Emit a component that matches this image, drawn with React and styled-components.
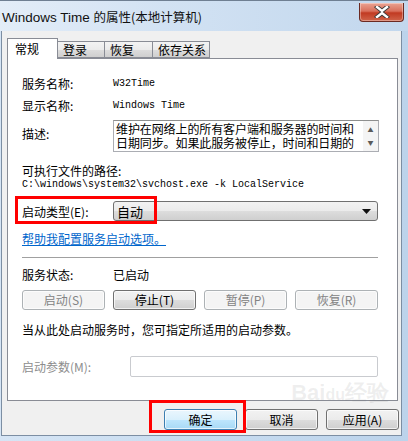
import React from 'react'
import styled, { createGlobalStyle } from 'styled-components'

const GlobalStyle = createGlobalStyle`
  html, body {
    margin: 0;
    padding: 0;
    background: #c7dbef;
  }
  body {
    font-family: "Noto Sans CJK SC", "Noto Sans", sans-serif;
    font-size: 12px;
    color: #000;
  }
`

const CJK = `"Noto Sans CJK SC", "Noto Sans", sans-serif`
const MONO = `"Liberation Mono", "DejaVu Sans Mono", monospace`

function App() {
  return (
    <Frame>
      <GlobalStyle />
      <TitleBar>
        <Title>
          <Latin>Windows Time </Latin>的属性(本地计算机)
        </Title>
        <CloseButton>
          <svg width="16" height="12" viewBox="0 0 16 12">
            <path d="M3 1 L8 5 L13 1 M3 11 L8 7 L13 11" stroke="#3a3a3a" strokeWidth="4.2" fill="none" strokeLinecap="square" />
            <path d="M3 1 L8 5 L13 1 M3 11 L8 7 L13 11" stroke="#fff" strokeWidth="2.4" fill="none" strokeLinecap="square" />
          </svg>
        </CloseButton>
      </TitleBar>

      <Body>
        <TabStrip>
          <Tab $active $w={51}>常规</Tab>
          <Tab $w={47}>登录</Tab>
          <Tab $w={48}>恢复</Tab>
          <Tab $w={57}>依存关系</Tab>
        </TabStrip>

        <Panel>
          <Row $h={22}>
            <Label>服务名称:</Label>
            <Mono>W32Time</Mono>
          </Row>
          <Row $h={22}>
            <Label>显示名称:</Label>
            <Mono>Windows Time</Mono>
          </Row>
          <Row $h={32} $mt={4} $top>
            <Label $offset={5}>描述:</Label>
            <DescBox>
              <DescText>
                维护在网络上的所有客户端和服务器的时间和日期同步。如果此服务被停止，时间和日期的
              </DescText>
              <ScrollBar>
                <Arrow>▲</Arrow>
                <Arrow>▼</Arrow>
              </ScrollBar>
            </DescBox>
          </Row>
          <Line $mt={12}>可执行文件的路径:</Line>
          <PathLine>C:\windows\system32\svchost.exe -k LocalService</PathLine>

          <Row $h={20} $mt={9}>
            <Label>启动类型(E):</Label>
            <Select>
              <span>自动</span>
              <svg width="9" height="5" viewBox="0 0 9 5">
                <path d="M0 0 H9 L4.5 5 Z" fill="#111" />
              </svg>
            </Select>
            <Highlight $l={-7} $t={-5} $w={142} $h={28} />
          </Row>

          <HelpLink>帮助我配置服务启动选项。</HelpLink>
          <Separator />

          <Row $h={14} $mt={9}>
            <Label>服务状态:</Label>
            <span>已启动</span>
          </Row>

          <ButtonRow>
            <PushButton disabled>启动(S)</PushButton>
            <PushButton>停止(T)</PushButton>
            <PushButton disabled>暂停(P)</PushButton>
            <PushButton disabled>恢复(R)</PushButton>
          </ButtonRow>

          <Line $mt={13}>当从此处启动服务时，您可指定所适用的启动参数。</Line>

          <Row $h={21} $mt={19}>
            <Label $w={108} $muted>启动参数(M):</Label>
            <ParamInput />
          </Row>
          <Watermark>Bai<small>du</small>经验</Watermark>
        </Panel>

        <Footer>
          <FooterSlot>
            <DialogButton $primary>确定</DialogButton>
            <Highlight $l={-15} $t={-9} $w={97} $h={33} />
          </FooterSlot>
          <DialogButton>取消</DialogButton>
          <DialogButton>应用(A)</DialogButton>
        </Footer>
      </Body>
    </Frame>
  )
}

export default App

const Frame = styled.div`
  width: 408px;
  height: 441px;
  display: flex;
  flex-direction: column;
  background: linear-gradient(90deg, #d6e5f5 0%, #c8dcf0 50%, #bcd3eb 100%);
  border-top: 1px solid #6f7f92;
  box-sizing: border-box;
  overflow: hidden;
`

const TitleBar = styled.div`
  height: 30px;
  display: flex;
  align-items: flex-start;
  justify-content: space-between;
  background: linear-gradient(90deg, #e3edf8 0%, #d2e2f3 40%, #c2d7ed 100%);
`

const Title = styled.div`
  font-family: "Noto Sans CJK SC", sans-serif;
  font-size: 12.5px;
  line-height: 18px;
  padding: 7px 0 0 2px;
  color: #111;
  white-space: nowrap;
`

const Latin = styled.span`
  font-family: "Liberation Sans", sans-serif;
  font-size: 13.5px;
`

const CloseButton = styled.div`
  width: 43px;
  height: 18px;
  margin: 2px 4px 0 0;
  display: flex;
  align-items: center;
  justify-content: center;
  border: 1px solid #6b2a22;
  border-top: none;
  border-radius: 0 0 4px 4px;
  background: linear-gradient(180deg, #eaa392 0%, #d9705c 45%, #c13a22 55%, #d0644a 100%);
  box-shadow: inset 0 0 0 1px rgba(255, 255, 255, 0.35);
`

const Body = styled.div`
  flex: 1;
  margin: 0 6px 5px 1px;
  background: #f0f0f0;
  border: 1px solid #7c8ea3;
  border-top: none;
  display: flex;
  flex-direction: column;
  padding: 7px 0 0 5px;
`

const TabStrip = styled.div`
  display: flex;
  align-items: flex-end;
  height: 20px;
`

const Tab = styled.div`
  position: relative;
  box-sizing: border-box;
  width: ${(p) => p.$w}px;
  height: ${(p) => (p.$active ? 21 : 17)}px;
  margin-bottom: ${(p) => (p.$active ? -1 : 0)}px;
  z-index: ${(p) => (p.$active ? 2 : 1)};
  border: 1px solid #898c95;
  border-bottom: ${(p) => (p.$active ? 'none' : '1px solid #898c95')};
  border-left: ${(p) => (p.$active ? '1px solid #898c95' : 'none')};
  background: ${(p) =>
    p.$active ? '#fff' : 'linear-gradient(180deg, #f3f3f3 0%, #ebebeb 50%, #dddddd 51%, #cfcfcf 100%)'};
  font-size: 12px;
  line-height: ${(p) => (p.$active ? 20 : 16)}px;
  padding-left: ${(p) => (p.$active ? 7 : 5)}px;
  white-space: nowrap;
`

const Panel = styled.div`
  position: relative;
  width: 391px;
  height: 343px;
  box-sizing: border-box;
  background: #fff;
  border: 1px solid #898c95;
  padding: 13px 0 0 14px;
  display: flex;
  flex-direction: column;
`

const Row = styled.div`
  position: relative;
  display: flex;
  align-items: ${(p) => (p.$top ? 'flex-start' : 'center')};
  height: ${(p) => p.$h}px;
  margin-top: ${(p) => p.$mt || 0}px;
  flex-shrink: 0;
`

const Label = styled.div`
  width: ${(p) => p.$w || 91}px;
  flex-shrink: 0;
  margin-top: ${(p) => p.$offset || 0}px;
  color: ${(p) => (p.$muted ? '#8d8d8d' : '#000')};
  white-space: nowrap;
`

const Mono = styled.span`
  font-family: ${MONO};
  font-size: 10px;
`

const Line = styled.div`
  margin-top: ${(p) => p.$mt || 0}px;
  line-height: 14px;
  white-space: nowrap;
`

const PathLine = styled.div`
  font-family: ${MONO};
  font-size: 10px;
  line-height: 14px;
  white-space: nowrap;
`

const DescBox = styled.div`
  width: 266px;
  height: 32px;
  box-sizing: border-box;
  border: 1px solid #abadb3;
  border-top-color: #8e8f8f;
  display: flex;
  overflow: hidden;
`

const DescText = styled.div`
  flex: 1;
  font-size: 12px;
  line-height: 14px;
  padding: 1px 0 0 2px;
  letter-spacing: -0.1px;
`

const ScrollBar = styled.div`
  width: 15px;
  background: #f4f4f4;
  display: flex;
  flex-direction: column;
  justify-content: space-between;
  align-items: center;
  padding: 5px 0 4px;
`

const Arrow = styled.span`
  font-size: 6px;
  line-height: 8px;
  color: #5a5a5a;
`

const Select = styled.div`
  width: 265px;
  height: 20px;
  box-sizing: border-box;
  border: 1px solid #707070;
  border-radius: 3px;
  background: linear-gradient(180deg, #f2f2f2 0%, #ebebeb 50%, #dddddd 51%, #cfcfcf 100%);
  display: flex;
  align-items: center;
  justify-content: space-between;
  padding: 0 6px 0 3px;
  font-size: 13px;
`

const Highlight = styled.div`
  position: absolute;
  left: ${(p) => p.$l}px;
  top: ${(p) => p.$t}px;
  width: ${(p) => p.$w}px;
  height: ${(p) => p.$h}px;
  box-sizing: border-box;
  border: 3px solid #ff0000;
  pointer-events: none;
  z-index: 3;
`

const HelpLink = styled.a`
  margin-top: 11px;
  line-height: 14px;
  color: #0066cc;
  text-decoration: underline;
  align-self: flex-start;
  cursor: pointer;
`

const Separator = styled.div`
  width: 356px;
  height: 1px;
  background: #a0a0a0;
  margin-top: 11px;
  flex-shrink: 0;
`

const ButtonRow = styled.div`
  display: flex;
  gap: 8px;
  margin-top: 9px;
  width: 356px;
`

const PushButton = styled.button`
  width: 83px;
  height: 20px;
  box-sizing: border-box;
  padding: 0;
  font-family: ${CJK};
  font-size: 12px;
  line-height: 16px;
  border-radius: 3px;
  border: 1px solid ${(p) => (p.disabled ? '#adb2b5' : '#707070')};
  color: ${(p) => (p.disabled ? '#838383' : '#000')};
  background: ${(p) =>
    p.disabled ? '#f4f4f4' : 'linear-gradient(180deg, #f2f2f2 0%, #ebebeb 50%, #dddddd 51%, #cfcfcf 100%)'};
  box-shadow: inset 0 0 0 1px rgba(255, 255, 255, 0.7);
`

const ParamInput = styled.div`
  width: 248px;
  height: 21px;
  box-sizing: border-box;
  border: 1px solid #c9cbcf;
  border-radius: 2px;
  background: #fff;
`

const Footer = styled.div`
  flex: 1;
  display: flex;
  justify-content: flex-end;
  align-items: flex-start;
  gap: 8px;
  padding: 8px 2px 0 0;
`

const FooterSlot = styled.div`
  position: relative;
  display: flex;
`

const DialogButton = styled.button`
  width: 73px;
  height: 21px;
  box-sizing: border-box;
  padding: 0;
  font-family: ${CJK};
  font-size: 12px;
  border-radius: 3px;
  border: 1px solid ${(p) => (p.$primary ? '#3c7fb1' : '#707070')};
  color: #000;
  background: ${(p) =>
    p.$primary
      ? 'linear-gradient(180deg, #eaf6fd 0%, #d9f0fc 50%, #bee6fd 51%, #a7d9f5 100%)'
      : 'linear-gradient(180deg, #f2f2f2 0%, #ebebeb 50%, #dddddd 51%, #cfcfcf 100%)'};
  box-shadow: inset 0 0 0 1px rgba(255, 255, 255, 0.7);
`

const Watermark = styled.div`
  position: absolute;
  right: 8px;
  bottom: -6px;
  font-family: "Liberation Sans", sans-serif;
  font-size: 22px;
  line-height: 22px;
  font-weight: bold;
  color: rgba(120, 120, 120, 0.12);
  pointer-events: none;
  z-index: 4;
  small {
    font-size: 16px;
  }
`
